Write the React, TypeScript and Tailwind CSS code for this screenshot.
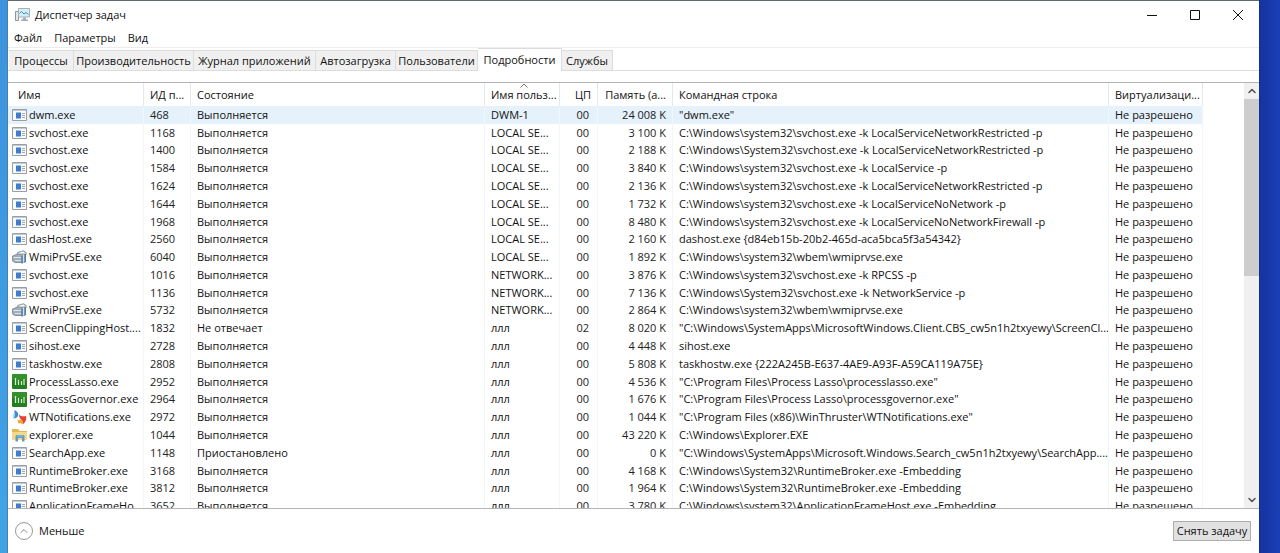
import React from "react";
import clsx from "clsx";
import { ChevronDown, ChevronUp } from "lucide-react";

type IconKind = "app" | "wmi" | "lasso" | "thruster" | "folder";

type ProcessRow = {
  name: string;
  pid: string;
  state: string;
  user: string;
  cpu: string;
  memory: string;
  command: string;
  icon: IconKind;
};

const row = (
  name: string,
  pid: string,
  user: string,
  memory: string,
  command: string,
  icon: IconKind = "app",
  state = "Выполняется",
  cpu = "00"
): ProcessRow => ({ name, pid, state, user, cpu, memory, command, icon });

const processes: ProcessRow[] = [
  row("dwm.exe", "468", "DWM-1", "24 008 K", '"dwm.exe"'),
  row("svchost.exe", "1168", "LOCAL SE...", "3 100 K", "C:\\Windows\\system32\\svchost.exe -k LocalServiceNetworkRestricted -p"),
  row("svchost.exe", "1400", "LOCAL SE...", "2 188 K", "C:\\Windows\\System32\\svchost.exe -k LocalServiceNetworkRestricted -p"),
  row("svchost.exe", "1584", "LOCAL SE...", "3 840 K", "C:\\Windows\\system32\\svchost.exe -k LocalService -p"),
  row("svchost.exe", "1624", "LOCAL SE...", "2 136 K", "C:\\Windows\\system32\\svchost.exe -k LocalServiceNetworkRestricted -p"),
  row("svchost.exe", "1644", "LOCAL SE...", "1 732 K", "C:\\Windows\\system32\\svchost.exe -k LocalServiceNoNetwork -p"),
  row("svchost.exe", "1968", "LOCAL SE...", "8 480 K", "C:\\Windows\\system32\\svchost.exe -k LocalServiceNoNetworkFirewall -p"),
  row("dasHost.exe", "2560", "LOCAL SE...", "2 160 K", "dashost.exe {d84eb15b-20b2-465d-aca5bca5f3a54342}"),
  row("WmiPrvSE.exe", "6040", "LOCAL SE...", "1 892 K", "C:\\Windows\\system32\\wbem\\wmiprvse.exe", "wmi"),
  row("svchost.exe", "1016", "NETWORK...", "3 876 K", "C:\\Windows\\system32\\svchost.exe -k RPCSS -p"),
  row("svchost.exe", "1136", "NETWORK...", "7 136 K", "C:\\Windows\\System32\\svchost.exe -k NetworkService -p"),
  row("WmiPrvSE.exe", "5732", "NETWORK...", "2 864 K", "C:\\Windows\\system32\\wbem\\wmiprvse.exe", "wmi"),
  row("ScreenClippingHost....", "1832", "ллл", "8 020 K", '"C:\\Windows\\SystemApps\\MicrosoftWindows.Client.CBS_cw5n1h2txyewy\\ScreenCl...', "app", "Не отвечает", "02"),
  row("sihost.exe", "2728", "ллл", "4 448 K", "sihost.exe"),
  row("taskhostw.exe", "2808", "ллл", "5 808 K", "taskhostw.exe {222A245B-E637-4AE9-A93F-A59CA119A75E}"),
  row("ProcessLasso.exe", "2952", "ллл", "4 536 K", '"C:\\Program Files\\Process Lasso\\processlasso.exe"', "lasso"),
  row("ProcessGovernor.exe", "2964", "ллл", "1 676 K", '"C:\\Program Files\\Process Lasso\\processgovernor.exe"', "lasso"),
  row("WTNotifications.exe", "2972", "ллл", "1 044 K", '"C:\\Program Files (x86)\\WinThruster\\WTNotifications.exe"', "thruster"),
  row("explorer.exe", "1044", "ллл", "43 220 K", "C:\\Windows\\Explorer.EXE", "folder"),
  row("SearchApp.exe", "1148", "ллл", "0 K", '"C:\\Windows\\SystemApps\\Microsoft.Windows.Search_cw5n1h2txyewy\\SearchApp....', "app", "Приостановлено"),
  row("RuntimeBroker.exe", "3168", "ллл", "4 168 K", "C:\\Windows\\System32\\RuntimeBroker.exe -Embedding"),
  row("RuntimeBroker.exe", "3812", "ллл", "1 964 K", "C:\\Windows\\System32\\RuntimeBroker.exe -Embedding"),
  row("ApplicationFrameHo...", "3652", "ллл", "3 780 K", "C:\\Windows\\system32\\ApplicationFrameHost.exe -Embedding"),
];

const tabs = [
  { label: "Процессы", width: "w-[65px]" },
  { label: "Производительность", width: "w-[120px]" },
  { label: "Журнал приложений", width: "w-[122px]" },
  { label: "Автозагрузка", width: "w-[80px]" },
  { label: "Пользователи", width: "w-[82px]" },
  { label: "Подробности", width: "w-[84px]", active: true },
  { label: "Службы", width: "w-[51px]" },
];

function TaskManagerIcon() {
  return (
    <svg width="16" height="14" viewBox="0 0 16 14" aria-hidden="true">
      <path d="M0.5 3.5h3v9h-3z" fill="#e4e8ea" stroke="#8d979c" />
      <path d="M3.5 0.5h11v8.5h-11z" fill="#d5edf7" stroke="#a5afb4" />
      <path d="M4.5 5.5l2-2 2.500 2.500 2-1.500 2.500 2" fill="none" stroke="#2c94bd" />
      <path d="M8 9.500h3v2h2v1.500H6v-1.500h2z" fill="#a4adb2" />
    </svg>
  );
}

function ProcessIcon({ kind }: { kind: IconKind }) {
  if (kind === "lasso") {
    return (
      <svg className="shrink-0" width="15" height="15" viewBox="0 0 15 15" aria-hidden="true">
        <rect width="15" height="15" rx="1" fill="#23801f" />
        <path d="M0 0h15v6H0z" fill="#3f9a35" opacity=".6" />
        <path d="M3.500 4v7M6.500 6v5M9.500 7v4M12 5v6" stroke="#d9f2cf" strokeWidth="1.200" />
      </svg>
    );
  }
  if (kind === "thruster") {
    return (
      <svg className="shrink-0" width="15" height="15" viewBox="0 0 15 15" aria-hidden="true">
        <path d="M2.500 0C5.500 1.500 7 3.500 6 6 5.300 7.500 3.500 8.500 1.500 8.500 3.500 6 2 4 2.500 0z" fill="#3590d6" />
        <path d="M1.500 8.500C3.500 6.500 3 4 2.500 2 1 4 .5 6.500 1.500 8.500z" fill="#a9d3ee" />
        <path d="M7 4.500c1.500 2 4.500 2 7 1.500 1 3.500-.5 6.500-3.500 8.500.5-2 .2-3.500-1-4.500C8 8.800 7 7 7 4.500z" fill="#e5452f" />
        <path d="M5.500 10.500c1.500-1 3-1.200 4.200-.3 1 1 1.200 2.500.8 4.300-1-1.500-2.800-1.200-4.500-1 .5-1 .3-2-.5-3z" fill="#f6a12a" />
      </svg>
    );
  }
  if (kind === "folder") {
    return (
      <svg className="shrink-0" width="15" height="14" viewBox="0 0 15 14" aria-hidden="true">
        <path d="M0 1h6l1.500 2H15v9H0z" fill="#e3b656" />
        <path d="M0 4h15v8H0z" fill="#f5d987" />
        <path d="M3.500 13.500V8.500C3.500 7.500 4 7 5 7h6c1 0 1.500.5 1.500 1.500v5H10V10H6v3.500z" fill="#5b9fce" />
        <path d="M5 8h6" stroke="#8fc4e6" />
      </svg>
    );
  }
  if (kind === "wmi") {
    return (
      <svg className="shrink-0" width="15" height="14" viewBox="0 0 15 14" aria-hidden="true">
        <path d="M5 5l1-2.500L11.500.8l2.500 2V5" fill="none" stroke="#8f979d" strokeWidth="1.200" />
        <path d="M0.500 6l5-2H13v8.500H3L.5 11z" fill="#a3afb9" stroke="#76838e" strokeWidth=".8" />
        <path d="M1.500 7.500H9M3 10.500h6" stroke="#dde3e8" />
        <path d="M10 5.500v8M13.300 4v8" stroke="#4f7fae" strokeWidth="1.400" />
        <path d="M11.600 4.500v8" stroke="#dfe7ee" />
      </svg>
    );
  }
  return (
    <svg className="shrink-0" width="15" height="12" viewBox="0 0 15 12" aria-hidden="true">
      <path d="M0.500 0.500h14v11H.5z" fill="#f8f9fa" stroke="#989ea3" />
      <path d="M1 1.500h13" stroke="#c3c9ce" />
      <path d="M4 3.500h5v6H4z" fill="#3f7ccb" />
      <path d="M10 4.500h3M10 6.500h3M10 8.500h3" stroke="#a2aab0" />
    </svg>
  );
}

function TitleBar() {
  return (
    <header className="flex h-7 shrink-0 items-center justify-between pl-[7px]">
      <div className="flex items-center gap-1">
        <TaskManagerIcon />
        <h1>Диспетчер задач</h1>
      </div>
      <div className="flex">
        <button type="button" aria-label="Свернуть" className="flex h-7 w-[43px] items-center justify-center">
          <svg width="10" height="10" viewBox="0 0 10 10" stroke="#111" fill="none" aria-hidden="true">
            <path d="M0 5.500h10" />
          </svg>
        </button>
        <button type="button" aria-label="Развернуть" className="flex h-7 w-[43px] items-center justify-center">
          <svg width="10" height="10" viewBox="0 0 10 10" stroke="#111" fill="none" aria-hidden="true">
            <path d="M0.500 0.500h9v9h-9z" />
          </svg>
        </button>
        <button type="button" aria-label="Закрыть" className="flex h-7 w-[43px] items-center justify-center">
          <svg width="10" height="10" viewBox="0 0 10 10" stroke="#111" fill="none" aria-hidden="true">
            <path d="M0 0l10 10M10 0L0 10" />
          </svg>
        </button>
      </div>
    </header>
  );
}

function TabStrip() {
  return (
    <div role="tablist" className="flex h-[23px] shrink-0 items-end border-b border-[#dcdcdc] pl-px">
      {tabs.map((tab) => (
        <button
          key={tab.label}
          type="button"
          role="tab"
          aria-selected={!!tab.active}
          className={clsx(
            "shrink-0 whitespace-nowrap border-r border-t border-[#dcdcdc] text-center",
            tab.width,
            tab.active ? "-mb-px h-[23px] bg-white pb-px" : "h-5 bg-[#f0f0f0]"
          )}
        >
          {tab.label}
        </button>
      ))}
    </div>
  );
}

function ProcessTable() {
  const head = "border-r border-[#dfe9ef] p-0 font-normal whitespace-nowrap overflow-hidden";
  const cell = "border-r border-[#f0f6fa] p-0 whitespace-nowrap overflow-hidden";

  return (
    <table className="h-[432px] w-full table-fixed border-separate border-spacing-0 text-left leading-4">
      <colgroup>
        <col className="w-[136px]" />
        <col className="w-[47px]" />
        <col className="w-[294px]" />
        <col className="w-[75px]" />
        <col className="w-[38px]" />
        <col className="w-[75px]" />
        <col />
        <col className="w-[94px]" />
        <col className="w-[41px]" />
      </colgroup>
      <thead>
        <tr className="h-[23px]">
          <th className={clsx(head, "pl-2.5")}>Имя</th>
          <th className={clsx(head, "pl-1.5")}>ИД п...</th>
          <th className={clsx(head, "pl-1.5")}>Состояние</th>
          <th className={clsx(head, "relative pl-1.5")} aria-sort="ascending">
            <svg className="absolute left-[35px] top-0" width="8" height="5" viewBox="0 0 8 5" aria-hidden="true">
              <path d="M0.500 4.500L4 1l3.500 3.500" fill="none" stroke="#777" />
            </svg>
            Имя польз...
          </th>
          <th className={clsx(head, "pr-1.5 text-right")}>ЦП</th>
          <th className={clsx(head, "pr-1.5 text-right")}>Память (а...</th>
          <th className={clsx(head, "pl-1.5")}>Командная строка</th>
          <th className={clsx(head, "pl-1.5")}>Виртуализаци...</th>
          <td />
        </tr>
      </thead>
      <tbody>
        {processes.map((p, i) => (
          <tr key={p.pid} className={clsx(i === 0 && "bg-[#e5f1fb]")}>
            <td className={cell}>
              <div className="flex h-4 items-center gap-0.5 pl-1">
                <ProcessIcon kind={p.icon} />
                <span>{p.name}</span>
              </div>
            </td>
            <td className={clsx(cell, "pl-1.5 text-[#222]")}>{p.pid}</td>
            <td className={clsx(cell, "pl-1.5")}>{p.state}</td>
            <td className={clsx(cell, "pl-1.5")}>{p.user}</td>
            <td className={clsx(cell, "pr-2 text-right text-[#222]")}>{p.cpu}</td>
            <td className={clsx(cell, "pr-1.5 text-right text-[#222]")}>{p.memory}</td>
            <td className={clsx(cell, "pl-1.5")}>{p.command}</td>
            <td className={clsx(cell, "pl-1.5")}>Не разрешено</td>
            <td className="bg-white p-0" />
          </tr>
        ))}
      </tbody>
    </table>
  );
}

function ScrollBar() {
  return (
    <div className="flex w-[15px] shrink-0 flex-col bg-[#f0f0f0]">
      <button type="button" aria-label="Прокрутить вверх" className="flex h-4 items-center justify-center text-[#505050]">
        <ChevronUp size={12} strokeWidth={3} />
      </button>
      <div className="min-h-0 flex-1">
        <div className="h-[45%] bg-[#cdcdcd]" />
      </div>
      <button type="button" aria-label="Прокрутить вниз" className="flex h-4 items-center justify-center text-[#505050]">
        <ChevronDown size={12} strokeWidth={3} />
      </button>
    </div>
  );
}

export default function App() {
  return (
    <div className="flex h-screen overflow-hidden bg-[#173cad] font-['Open_Sans','Noto_Sans',sans-serif] text-[11px] leading-4 text-[#111]">
      <div className="w-2 shrink-0 border-r border-[#4a7fa8] bg-linear-to-b from-[#3d93dd] to-[#41a3e6]" />

      <main className="flex min-w-0 flex-1 flex-col border-t border-[#60686f] bg-white">
        <TitleBar />

        <nav className="flex h-[19px] shrink-0 items-center gap-3 border-b border-[#ececec] pl-1.5">
          <button type="button">Файл</button>
          <button type="button">Параметры</button>
          <button type="button">Вид</button>
        </nav>

        <TabStrip />

        {/* Details list */}
        <section className="mt-[11px] flex min-h-0 flex-1 border-y border-[#b4b4b4]">
          <div className="min-w-0 flex-1 overflow-hidden">
            <ProcessTable />
          </div>
          <ScrollBar />
        </section>

        <footer className="flex h-11 shrink-0 items-center justify-between pl-[7px] pr-2">
          <button type="button" className="flex items-center gap-1.5">
            <span className="flex size-[18px] items-center justify-center rounded-full border border-[#999] text-[#888]">
              <ChevronUp size={12} strokeWidth={2} />
            </span>
            Меньше
          </button>
          <button type="button" className="h-5 w-[78px] whitespace-nowrap border border-[#adadad] bg-[#e1e1e1]">
            Снять задачу
          </button>
        </footer>
      </main>

      <div className="w-[21px] shrink-0 border-l border-[#14308a] bg-linear-to-r from-[#1634a0] to-[#193fb4]" />
    </div>
  );
}
